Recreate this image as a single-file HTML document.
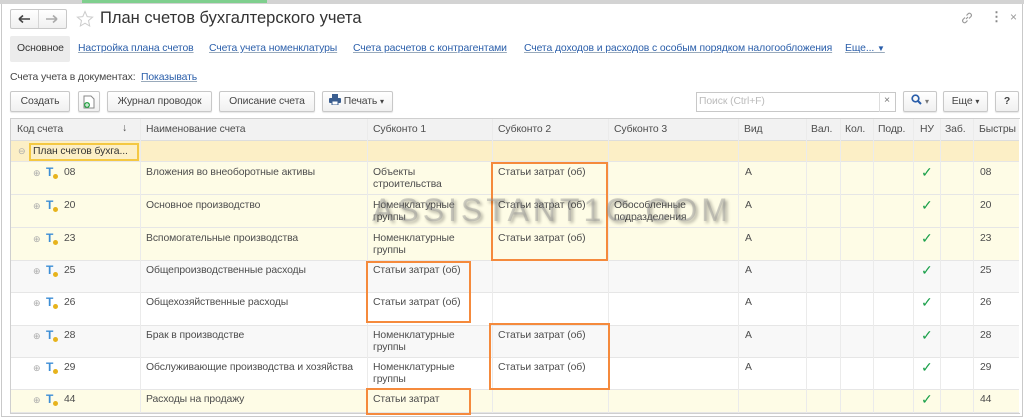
<!DOCTYPE html><html><head><meta charset="utf-8"><style>
*{box-sizing:border-box;margin:0;padding:0}
body{width:1024px;height:418px;overflow:hidden;background:#fff;font-family:"Liberation Sans",sans-serif;font-size:10.4px;letter-spacing:-0.1px;color:#4d4d4d;position:relative}
.a{position:absolute;white-space:nowrap}
.lnk{color:#2a5eaa;text-decoration:underline;text-decoration-color:#9ab}
.btn{position:absolute;top:91px;height:21px;border:1px solid #c8c8c8;border-radius:2px;background:linear-gradient(#fff,#f0f0f0);box-shadow:0 1px 1px rgba(0,0,0,.1);color:#444;text-align:center;line-height:19px}
.row{position:absolute;left:11px;width:1008px;border-bottom:1px solid #e6e6e6}
.ob{position:absolute;border:2px solid #f58a3c}
.vl{position:absolute;top:119px;height:294px;width:1px;background:#ebebeb}
.ck{position:absolute;color:#1aa04a;font-size:14px}
.ic{position:absolute;font-size:9px;color:#aaa}
.T{position:absolute;color:#3d8ed6;font-weight:bold;font-size:12px}
.T:after{content:"";position:absolute;left:7px;top:9px;width:5px;height:5px;border-radius:50%;background:#e7b31c}
</style></head><body>
<div class="a" style="left:0;top:0;width:1024px;height:4px;background:#d3d3d3"></div>
<div class="a" style="left:82px;top:0;width:185px;height:3px;background:#7fcf8e"></div>
<div class="a" style="left:1px;top:4px;width:1022px;height:413px;border:1px solid #c9c9c9;border-top:none"></div>
<div class="a" style="left:10px;top:9px;width:57px;height:20px;border:1px solid #c8c8c8;border-radius:2px;background:linear-gradient(#fff,#f0f0f0)"></div>
<div class="a" style="left:38px;top:10px;width:1px;height:18px;background:#d5d5d5"></div>
<svg class="a" style="left:17px;top:14px" width="14" height="10"><path d="M2 5H13M2 5L6 1.5M2 5L6 8.5" stroke="#444" stroke-width="1.6" fill="none"/></svg>
<svg class="a" style="left:45px;top:14px" width="14" height="10"><path d="M1 5H12M12 5L8 1.5M12 5L8 8.5" stroke="#aaa" stroke-width="1.6" fill="none"/></svg>
<svg class="a" style="left:76px;top:10px" width="18" height="18"><path d="M9 1.5L11.2 6.6 16.6 7.1 12.5 10.6 13.7 16 9 13.2 4.3 16 5.5 10.6 1.4 7.1 6.8 6.6Z" fill="none" stroke="#ccc" stroke-width="1"/></svg>
<div class="a" style="left:100px;top:9px;font-size:16.5px;letter-spacing:0;color:#333">План счетов бухгалтерского учета</div>
<svg class="a" style="left:960px;top:11px" width="14" height="14"><path d="M6 8L8 6M5 6.5L3 8.5a2 2 0 0 0 2.8 2.8L7.5 9.5M9 7.5L11 5.5a2 2 0 0 0-2.8-2.8L6.5 4.5" stroke="#999" fill="none" stroke-width="1.1"/></svg>
<div class="a" style="left:990px;top:9px;font-size:13px;color:#888;font-weight:bold">⋮</div>
<div class="a" style="left:1010px;top:10px;font-size:12px;color:#999">×</div>
<div class="a" style="left:10px;top:36px;width:60px;height:26px;background:#ececec;border-radius:2px"></div>
<div class="a" style="left:17px;top:43px;color:#333">Основное</div>
<div class="a lnk" style="left:78px;top:43px">Настройка плана счетов</div>
<div class="a lnk" style="left:209px;top:43px">Счета учета номенклатуры</div>
<div class="a lnk" style="left:353px;top:43px">Счета расчетов с контрагентами</div>
<div class="a lnk" style="left:524px;top:43px">Счета доходов и расходов с особым порядком налогообложения</div>
<div class="a lnk" style="left:845px;top:43px">Еще... <span style="text-decoration:none;font-size:8px">▼</span></div>
<div class="a" style="left:10px;top:72px;color:#444">Счета учета в документах:</div>
<div class="a lnk" style="left:141px;top:72px">Показывать</div>
<div class="btn" style="left:10px;width:60px">Создать</div>
<div class="btn" style="left:78px;width:22px"><svg width="12" height="14" style="margin-top:3px"><path d="M1 1H8L11 4V13H1Z" fill="#fff" stroke="#888"/><circle cx="4" cy="10" r="3" fill="#2da44a"/><path d="M4 8V12M2 10H6" stroke="#fff"/></svg></div>
<div class="btn" style="left:107px;width:105px">Журнал проводок</div>
<div class="btn" style="left:219px;width:96px">Описание счета</div>
<div class="btn" style="left:322px;width:71px;text-align:left;padding-left:6px"><svg width="12" height="11" style="vertical-align:-1px"><rect x="3" y="0" width="6" height="4" fill="#3a5d8f"/><rect x="0" y="4" width="12" height="5" rx="1" fill="#3a5d8f"/><rect x="3" y="7" width="6" height="4" fill="#fff" stroke="#3a5d8f"/></svg> Печать <span style="font-size:8px">▾</span></div>
<div class="a" style="left:696px;top:92px;width:200px;height:20px;border:1px solid #c8c8c8;background:#fff"></div>
<div class="a" style="left:699px;top:96px;color:#bbb">Поиск (Ctrl+F)</div>
<div class="a" style="left:879px;top:92px;width:1px;height:20px;background:#ddd"></div>
<div class="a" style="left:884px;top:95px;color:#777">×</div>
<div class="btn" style="left:903px;width:34px"><svg width="11" height="11" style="vertical-align:-1px"><circle cx="4.5" cy="4.5" r="3.3" fill="none" stroke="#2a5eaa" stroke-width="1.7"/><path d="M7 7L10 10" stroke="#2a5eaa" stroke-width="2"/></svg> <span style="color:#777;font-size:8px">▾</span></div>
<div class="btn" style="left:943px;width:45px">Еще <span style="font-size:8px">▾</span></div>
<div class="btn" style="left:995px;width:24px;font-weight:bold">?</div>
<div class="a" style="left:10px;top:118px;width:1010px;height:296px;border:1px solid #cfcfcf;border-right:none"></div>
<div class="row" style="top:119px;height:22px;background:#f2f2f2;border-bottom:1px solid #ddd"></div>
<div class="row" style="top:141px;height:21px;background:#fcefc6"></div>
<div class="row" style="top:162px;height:33px;background:#fefce6"></div>
<div class="row" style="top:195px;height:33px;background:#fefce6"></div>
<div class="row" style="top:228px;height:33px;background:#fefce6"></div>
<div class="row" style="top:261px;height:32px;background:#f8f8f8"></div>
<div class="row" style="top:293px;height:33px;background:#fff"></div>
<div class="row" style="top:326px;height:32px;background:#f8f8f8"></div>
<div class="row" style="top:358px;height:32px;background:#fff"></div>
<div class="row" style="top:390px;height:23px;background:#fefce6"></div>
<div class="vl" style="left:140px"></div><div class="vl" style="left:367px"></div><div class="vl" style="left:492px"></div><div class="vl" style="left:608px"></div><div class="vl" style="left:738px"></div><div class="vl" style="left:806px"></div><div class="vl" style="left:840px"></div><div class="vl" style="left:873px"></div><div class="vl" style="left:913px"></div><div class="vl" style="left:940px"></div><div class="vl" style="left:973px"></div>
<div class="a" style="left:17px;top:124px">Код счета</div><div class="a" style="left:122px;top:123px">↓</div>
<div class="a" style="left:146px;top:124px">Наименование счета</div>
<div class="a" style="left:373px;top:124px">Субконто 1</div>
<div class="a" style="left:498px;top:124px">Субконто 2</div>
<div class="a" style="left:614px;top:124px">Субконто 3</div>
<div class="a" style="left:744px;top:124px">Вид</div>
<div class="a" style="left:811px;top:124px">Вал.</div>
<div class="a" style="left:845px;top:124px">Кол.</div>
<div class="a" style="left:878px;top:124px">Подр.</div>
<div class="a" style="left:920px;top:124px">НУ</div>
<div class="a" style="left:945px;top:124px">Заб.</div>
<div class="a" style="left:979px;top:124px">Быстры</div>
<div class="ic" style="left:18px;top:146px">⊖</div>
<div class="a" style="left:29px;top:143px;width:110px;height:18px;border:2px solid #f4c842;padding:1px 2px;color:#333">План счетов бухга...</div>
<div class="ic" style="left:33px;top:168px">⊕</div><div class="T" style="left:46px;top:165px">T</div><div class="a" style="left:64px;top:167px">08</div><div class="a" style="left:146px;top:167px">Вложения во внеоборотные активы</div><div class="a" style="left:373px;top:167px;line-height:12px">Объекты<br>строительства</div><div class="a" style="left:498px;top:167px">Статьи затрат (об)</div><div class="a" style="left:745px;top:167px">А</div><div class="ck" style="left:921px;top:164px">✓</div><div class="a" style="left:980px;top:167px">08</div>
<div class="ic" style="left:33px;top:201px">⊕</div><div class="T" style="left:46px;top:198px">T</div><div class="a" style="left:64px;top:200px">20</div><div class="a" style="left:146px;top:200px">Основное производство</div><div class="a" style="left:373px;top:200px;line-height:12px">Номенклатурные<br>группы</div><div class="a" style="left:498px;top:200px">Статьи затрат (об)</div><div class="a" style="left:614px;top:200px;line-height:12px">Обособленные<br>подразделения</div><div class="a" style="left:745px;top:200px">А</div><div class="ck" style="left:921px;top:197px">✓</div><div class="a" style="left:980px;top:200px">20</div>
<div class="ic" style="left:33px;top:234px">⊕</div><div class="T" style="left:46px;top:231px">T</div><div class="a" style="left:64px;top:233px">23</div><div class="a" style="left:146px;top:233px">Вспомогательные производства</div><div class="a" style="left:373px;top:233px;line-height:12px">Номенклатурные<br>группы</div><div class="a" style="left:498px;top:233px">Статьи затрат (об)</div><div class="a" style="left:745px;top:233px">А</div><div class="ck" style="left:921px;top:230px">✓</div><div class="a" style="left:980px;top:233px">23</div>
<div class="ic" style="left:33px;top:266px">⊕</div><div class="T" style="left:46px;top:263px">T</div><div class="a" style="left:64px;top:265px">25</div><div class="a" style="left:146px;top:265px">Общепроизводственные расходы</div><div class="a" style="left:373px;top:265px">Статьи затрат (об)</div><div class="a" style="left:745px;top:265px">А</div><div class="ck" style="left:921px;top:262px">✓</div><div class="a" style="left:980px;top:265px">25</div>
<div class="ic" style="left:33px;top:298px">⊕</div><div class="T" style="left:46px;top:295px">T</div><div class="a" style="left:64px;top:297px">26</div><div class="a" style="left:146px;top:297px">Общехозяйственные расходы</div><div class="a" style="left:373px;top:297px">Статьи затрат (об)</div><div class="a" style="left:745px;top:297px">А</div><div class="ck" style="left:921px;top:294px">✓</div><div class="a" style="left:980px;top:297px">26</div>
<div class="ic" style="left:33px;top:331px">⊕</div><div class="T" style="left:46px;top:328px">T</div><div class="a" style="left:64px;top:330px">28</div><div class="a" style="left:146px;top:330px">Брак в производстве</div><div class="a" style="left:373px;top:330px;line-height:12px">Номенклатурные<br>группы</div><div class="a" style="left:498px;top:330px">Статьи затрат (об)</div><div class="a" style="left:745px;top:330px">А</div><div class="ck" style="left:921px;top:327px">✓</div><div class="a" style="left:980px;top:330px">28</div>
<div class="ic" style="left:33px;top:363px">⊕</div><div class="T" style="left:46px;top:360px">T</div><div class="a" style="left:64px;top:362px">29</div><div class="a" style="left:146px;top:362px">Обслуживающие производства и хозяйства</div><div class="a" style="left:373px;top:362px;line-height:12px">Номенклатурные<br>группы</div><div class="a" style="left:498px;top:362px">Статьи затрат (об)</div><div class="a" style="left:745px;top:362px">А</div><div class="ck" style="left:921px;top:359px">✓</div><div class="a" style="left:980px;top:362px">29</div>
<div class="ic" style="left:33px;top:395px">⊕</div><div class="T" style="left:46px;top:392px">T</div><div class="a" style="left:64px;top:394px">44</div><div class="a" style="left:146px;top:394px">Расходы на продажу</div><div class="a" style="left:373px;top:394px">Статьи затрат</div><div class="ck" style="left:921px;top:391px">✓</div><div class="a" style="left:980px;top:394px">44</div>
<div class="ob" style="left:491px;top:162px;width:117px;height:99px"></div>
<div class="ob" style="left:366px;top:261px;width:105px;height:62px"></div>
<div class="ob" style="left:489px;top:323px;width:121px;height:67px"></div>
<div class="ob" style="left:366px;top:388px;width:105px;height:27px"></div>
<div class="a" style="left:372px;top:192px;font-size:32px;letter-spacing:4px;color:rgba(150,150,150,.45);text-shadow:2px 2px 3px rgba(0,0,0,.3)">ASSISTANT1C.COM</div>
</body></html>
